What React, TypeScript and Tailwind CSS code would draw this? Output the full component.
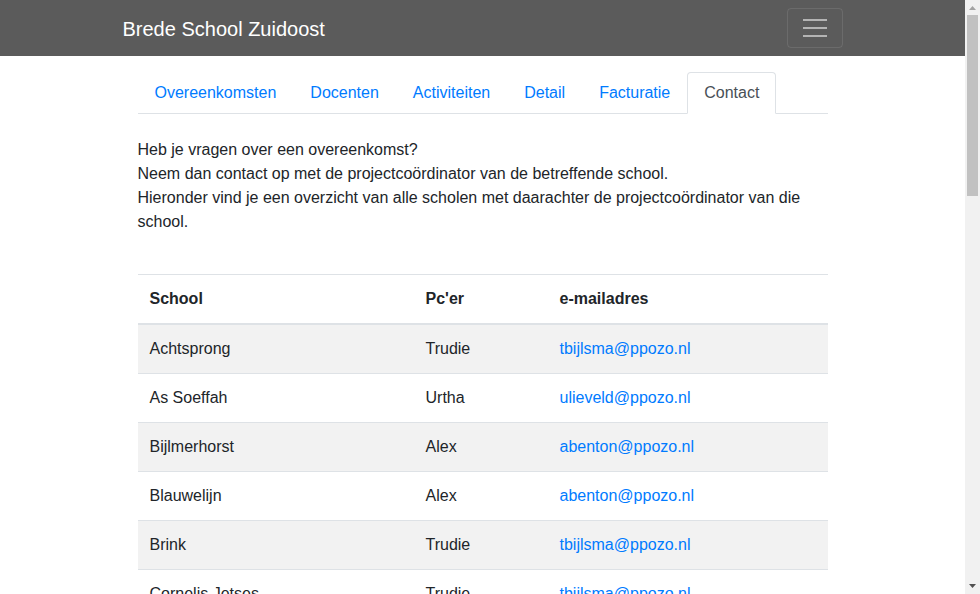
import React from "react";

const tabs = ["Overeenkomsten", "Docenten", "Activiteiten", "Detail", "Facturatie", "Contact"];

const rows = [
  ["Achtsprong", "Trudie", "tbijlsma@ppozo.nl"],
  ["As Soeffah", "Urtha", "ulieveld@ppozo.nl"],
  ["Bijlmerhorst", "Alex", "abenton@ppozo.nl"],
  ["Blauwelijn", "Alex", "abenton@ppozo.nl"],
  ["Brink", "Trudie", "tbijlsma@ppozo.nl"],
  ["Cornelis Jetses", "Trudie", "tbijlsma@ppozo.nl"],
  ["De Bijlmer", "Urtha", "ulieveld@ppozo.nl"],
  ["De Polsstok", "Alex", "abenton@ppozo.nl"],
];

function Scrollbar() {
  return (
    <div className="w-[15px] h-full bg-[#f1f1f1] flex flex-col items-center shrink-0">
      <svg width="15" height="15" viewBox="0 0 15 15" className="shrink-0">
        <path d="M4 10 L7.5 6 L11 10 Z" fill="#a3a3a3" />
      </svg>
      <div className="w-[11px] h-[181px] bg-[#c1c1c1]" />
      <div className="flex-1" />
      <svg width="15" height="15" viewBox="0 0 15 15" className="shrink-0">
        <path d="M4 5 L11 5 L7.5 9 Z" fill="#505050" />
      </svg>
    </div>
  );
}

export default function App() {
  return (
    <div className="h-screen flex overflow-hidden bg-white text-[#212529] font-['Liberation_Sans',Arial,sans-serif] text-base leading-6">
      <div className="flex-1 h-full overflow-hidden">
        <nav className="bg-[#5b5b5b] h-14">
          <div className="mx-auto w-[720px] h-full flex items-center justify-between">
            <span className="text-white text-xl leading-[30px] pt-px">Brede School Zuidoost</span>
            <button className="w-14 h-10 border border-white/10 rounded flex flex-col items-center justify-center gap-[6px]">
              <span className="block w-6 h-[2px] bg-[#b4b4b4]" />
              <span className="block w-6 h-[2px] bg-[#b4b4b4]" />
              <span className="block w-6 h-[2px] bg-[#b4b4b4]" />
            </button>
          </div>
        </nav>

        <main className="mx-auto w-[720px] px-[15px] pt-4 pb-10">
          <ul className="flex border-b border-[#dee2e6]">
            {tabs.map((t) => (
              <li key={t} className="-mb-px">
                {t === "Contact" ? (
                  <span className="block px-4 py-2 border border-[#dee2e6] border-b-white rounded-t bg-white text-[#495057]">
                    {t}
                  </span>
                ) : (
                  <a href="#" className="block px-4 py-2 border border-transparent text-[#007bff]">
                    {t}
                  </a>
                )}
              </li>
            ))}
          </ul>

          <p className="mt-6">
            Heb je vragen over een overeenkomst?
            <br />
            Neem dan contact op met de projectcoördinator van de betreffende school.
            <br />
            Hieronder vind je een overzicht van alle scholen met daarachter de projectcoördinator van die school.
          </p>

          <table className="mt-10 w-full border-collapse text-left">
            <thead>
              <tr className="border-t border-[#dee2e6] border-b-2">
                <th className="w-[276px] p-3 font-bold">School</th>
                <th className="w-[134px] p-3 font-bold">Pc'er</th>
                <th className="p-3 font-bold">e-mailadres</th>
              </tr>
            </thead>
            <tbody>
              {rows.map((r, i) => (
                <tr key={i} className={`border-t border-[#dee2e6] ${i % 2 === 0 ? "bg-[#f2f2f2]" : "bg-white"}`}>
                  <td className="p-3">{r[0]}</td>
                  <td className="p-3">{r[1]}</td>
                  <td className="p-3">
                    <a href="#" className="text-[#007bff]">{r[2]}</a>
                  </td>
                </tr>
              ))}
            </tbody>
          </table>
        </main>
      </div>
      <Scrollbar />
    </div>
  );
}
